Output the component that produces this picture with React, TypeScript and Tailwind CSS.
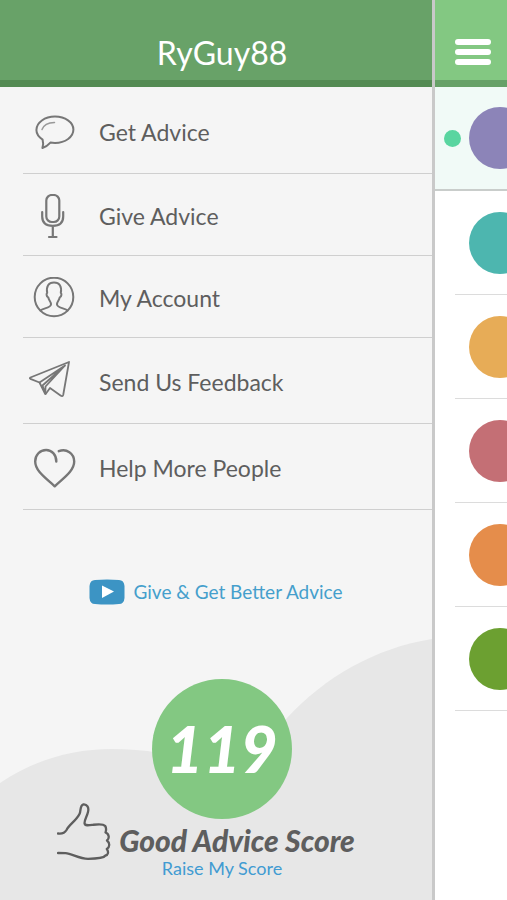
import { ReactNode } from "react"

const BubbleIcon = () => (
    <svg width="44" height="44" viewBox="0 0 44 44" fill="none" stroke="#777" strokeWidth="2" strokeLinejoin="round" strokeLinecap="round">
        <path d="M9.6 29.6C5.800 27 3.400 23.600 3.400 20 3.400 12.500 11.800 6.600 22 6.600S40.400 12.300 40.400 19.600 32.500 33 22 33C20.300 33 18.800 32.900 17.400 32.600 15.300 35 12.800 36.900 9.400 38 10.300 35.200 10.400 32.300 9.600 29.600Z" />
        <path d="M9 19.500C10.500 15.300 15.500 12.700 21.500 12.500" stroke="#999" strokeWidth="1.500" />
    </svg>
)

const MicIcon = () => (
    <svg width="44" height="46" viewBox="0 1 44 46" fill="none" stroke="#777" strokeWidth="2.200" strokeLinejoin="round" strokeLinecap="round">
        <rect x="13.300" y="2" width="13" height="27" rx="5.500" />
        <path d="M9.200 19V23.500C9.200 30 13 32.800 19.800 32.800S30.200 30 30.200 23.500V19M19.800 33V43.500M16 44H23.500" />
    </svg>
)

const AccountIcon = () => (
    <svg width="44" height="44" viewBox="0 2 44 44" fill="none" stroke="#777" strokeWidth="2" strokeLinejoin="round" strokeLinecap="round">
        <circle cx="21" cy="22" r="19.300" />
        <path d="M7.500 35.500C9.500 33.200 17.800 33 18 29.500 18.100 26.500 16 26 15.300 22.500 13 21 13.400 18.500 14.200 18 13 11.500 15.500 7.500 21 7.500S29 11.500 27.800 18C28.600 18.500 29 21 26.700 22.500 26 26 23.900 26.500 24 29.500 24.200 33 32.500 33.200 34.500 35.500" />
    </svg>
)

const PlaneIcon = () => (
    <svg className="overflow-visible" width="44" height="44" viewBox="0 0 44 44" fill="none" stroke="#777" strokeWidth="1.800" strokeLinejoin="round" strokeLinecap="round">
        <path d="M36 1L-2.600 16.500Q-3.800 17.200-2.600 17.800L6.500 21.500 12 32.500Q12.500 33.500 13 32.500L17 27 27.500 34.500Q29.500 36 30.200 34Z" />
        <path d="M6.500 21.500L32 4.500 9.500 24.500 12.300 32.500M32 4.500L12.500 25.500 12.300 32.500" />
    </svg>
)

const HeartIcon = () => (
    <svg width="44" height="44" viewBox="0 1 44 44" fill="none" stroke="#777" strokeWidth="2.400" strokeLinejoin="round" strokeLinecap="round">
        <path d="M23.300 15.500C23.500 8.500 18.500 4 13.200 4 7 4 2.200 8.800 2.200 15.500 2.200 25.500 14 33 21.700 40.300 29 33 41.200 25.500 41.200 15.500 41.200 7.500 33.500 2 25.800 5.200" />
    </svg>
)

const ThumbIcon = () => (
    <svg className="shrink-0" width="54" height="60" viewBox="0 0 54 60" fill="none" stroke="#5e5e5e" strokeWidth="2.300" strokeLinejoin="round" strokeLinecap="round">
        <path d="M1 31.500C5 32 7.500 31.500 9.500 28 12.500 22 19 19 22.500 12 24.300 8.500 22.500 3.500 26.500 2.300 30 2 32.200 5.500 31 10 30 14.500 27 18.500 27.600 21.500 28 24 32 23.300 36 22.800 41 22.200 46 21.500 48.200 24 49.500 26 49.300 28 48.500 30.500 52.500 32 52.500 36.500 50 38.500 53 41 53 45 49.800 47 52 50 51 53 48.500 53.500 46.500 56.500 38 56.800 31 56.800 22 56.800 15 51.500 8.500 51.100L1 51" />
    </svg>
)

const items: { label: string, height: string, icon: ReactNode }[] = [
    { label: "Get Advice", height: "h-[87px]", icon: <BubbleIcon /> },
    { label: "Give Advice", height: "h-[82px]", icon: <MicIcon /> },
    { label: "My Account", height: "h-[82px]", icon: <AccountIcon /> },
    { label: "Send Us Feedback", height: "h-[86px]", icon: <PlaneIcon /> },
    { label: "Help More People", height: "h-[86px]", icon: <HeartIcon /> },
]

const topics = ["bg-[#4db6af]", "bg-[#e7ac57]", "bg-[#c46f75]", "bg-[#e58d4b]", "bg-[#6ca031]"]

const Menu = () => {
    return (
        <nav className="pl-[23px]">
            <ul>
                {items.map((item) => (
                    <li key={item.label}>
                        <a href="#" className={`flex items-center border-b border-[#cfcfcf] pt-1 text-[23px] text-[#5e5e5e] ${item.height}`}>
                            <span className="flex w-[76px] shrink-0 pl-2.5">{item.icon}</span>
                            {item.label}
                        </a>
                    </li>
                ))}
            </ul>
        </nav>
    )
}

const Score = () => {
    return (
        <section className="relative mt-auto h-[262px] pt-[41px] pl-3">
            <svg className="absolute inset-0 h-full w-full" viewBox="0 0 432 262" preserveAspectRatio="none" fill="#e7e7e7">
                <path d="M0 145C34 122 72 111 112 111C150 111 185 118 220 132C250 130 270 98 287 80C325 39 375 10 432 1V262H0Z" />
            </svg>
            <div className="relative flex flex-col items-center">
                <div className="flex size-[140px] items-center justify-center rounded-full bg-[#83c882] text-[64px] font-black text-white italic">
                    119
                </div>
                <div className="-mt-[17px] flex items-center gap-2 pr-8">
                    <ThumbIcon />
                    <h2 className="pt-4 text-[30px] leading-8 font-black whitespace-nowrap text-[#5e5e5e] italic">Good Advice Score</h2>
                </div>
                <a href="#" className="-mt-1.5 text-[18px] leading-6 text-[#419bd2]">Raise My Score</a>
            </div>
        </section>
    )
}

const Sidebar = () => {
    return (
        <div className="flex min-w-0 flex-1 flex-col border-r-3 border-[#c9c9c9] bg-[#f5f5f5]">
            <header className="flex h-[87px] items-center justify-center border-b-7 border-[#548b53] bg-[#68a268] pt-[26px] pl-3">
                <h1 className="text-[32px] text-white">RyGuy88</h1>
            </header>
            <Menu />
            <a href="#" className="mt-[68px] mb-8 flex items-center justify-center gap-2 text-[19px] leading-7 text-[#459fcc]">
                <svg width="36" height="26" viewBox="0 0 36 26">
                    <path d="M6 1Q18 0 30 1Q35 1 35.500 7V19Q35 25 30 25Q18 26 6 25Q1 25 .5 19V7Q1 1 6 1Z" fill="#3c94c4" />
                    <path d="M13 6.500L25 12.500L13 19Z" fill="#fff" />
                </svg>
                Give &amp; Get Better Advice
            </a>
            <Score />
        </div>
    )
}

const Topics = () => {
    return (
        <main className="w-[72px] shrink-0 overflow-hidden bg-white">
            <div className="h-[87px] border-b-7 border-[#67a168] bg-[#83c882] pt-[39px] pl-5">
                <button aria-label="Menu" className="flex w-9 flex-col gap-1">
                    <span className="h-1.5 w-full rounded-full bg-white" />
                    <span className="h-1.5 w-full rounded-full bg-white" />
                    <span className="h-1.5 w-full rounded-full bg-white" />
                </button>
            </div>
            <div className="flex h-[104px] items-center gap-2 border-b-2 border-[#c9cdcb] bg-[#f1faf7] pl-[9px]">
                <span className="size-[17px] shrink-0 rounded-full bg-[#59d5a0]" />
                <span className="size-[62px] shrink-0 rounded-full bg-[#8c84b8]" />
            </div>
            {topics.map((color) => (
                <div key={color} className="ml-5 flex h-[104px] items-center border-b border-[#dcdcdc] pl-3.5">
                    <span className={`size-[62px] shrink-0 rounded-full ${color}`} />
                </div>
            ))}
        </main>
    )
}

const App = () => {
    return (
        <div className="flex min-h-screen font-['Lato','Open_Sans',sans-serif]">
            <Sidebar />
            <Topics />
        </div>
    )
}

export default App
